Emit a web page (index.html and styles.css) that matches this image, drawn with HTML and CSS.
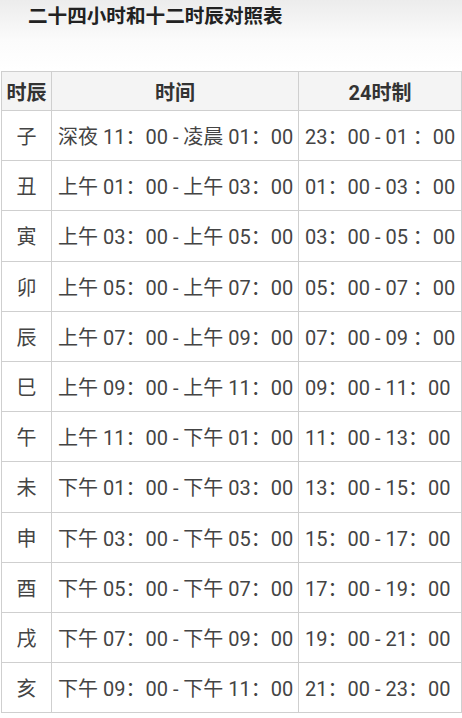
FILE: index.html
```html
<!DOCTYPE html>
<html lang="zh-CN">
<head>
<meta charset="utf-8">
<link rel="stylesheet" href="styles.css">
</head>
<body>
<h1 class="title">二十四小时和十二时辰对照表</h1>
<table class="chart">
  <colgroup><col class="c1"><col class="c2"><col class="c3"></colgroup>
  <thead>
    <tr><th>时辰</th><th>时间</th><th>24时制</th></tr>
  </thead>
  <tbody>
    <tr><td class="zh">子</td><td>深夜 11：00 - 凌晨 01：00</td><td>23：00 - 01 ：00</td></tr>
    <tr><td class="zh">丑</td><td>上午 01：00 - 上午 03：00</td><td>01：00 - 03 ：00</td></tr>
    <tr><td class="zh">寅</td><td>上午 03：00 - 上午 05：00</td><td>03：00 - 05 ：00</td></tr>
    <tr><td class="zh">卯</td><td>上午 05：00 - 上午 07：00</td><td>05：00 - 07 ：00</td></tr>
    <tr><td class="zh">辰</td><td>上午 07：00 - 上午 09：00</td><td>07：00 - 09 ：00</td></tr>
    <tr><td class="zh">巳</td><td>上午 09：00 - 上午 11：00</td><td>09：00 - 11：00</td></tr>
    <tr><td class="zh">午</td><td>上午 11：00 - 下午 01：00</td><td>11：00 - 13：00</td></tr>
    <tr><td class="zh">未</td><td>下午 01：00 - 下午 03：00</td><td>13：00 - 15：00</td></tr>
    <tr><td class="zh">申</td><td>下午 03：00 - 下午 05：00</td><td>15：00 - 17：00</td></tr>
    <tr><td class="zh">酉</td><td>下午 05：00 - 下午 07：00</td><td>17：00 - 19：00</td></tr>
    <tr><td class="zh">戌</td><td>下午 07：00 - 下午 09：00</td><td>19：00 - 21：00</td></tr>
    <tr><td class="zh">亥</td><td>下午 09：00 - 下午 11：00</td><td>21：00 - 23：00</td></tr>
  </tbody>
</table>
</body>
</html>
```
FILE: styles.css
```css
html, body {
  margin: 0;
  padding: 0;
  background: #fff;
}
body {
  font-family: Roboto, "Noto Sans CJK SC", sans-serif;
  color: #444;
  background: linear-gradient(#ececec 0, #fbfbfb 40px, #fff 70px);
  min-height: 718px;
}
.title {
  margin: 0;
  padding: 5px 0 0 28px;
  height: 71px;
  box-sizing: border-box;
  font-size: 19.6px;
  font-weight: 700;
  color: #222;
  line-height: 24px;
}
.chart {
  margin-left: 1px;
  width: 460px;
  border-collapse: collapse;
  table-layout: fixed;
  font-size: 20px;
}
.c1 { width: 50px; }
.c2 { width: 247px; }
.c3 { width: 163px; }
.chart th, .chart td {
  border: 1px solid #cfcfcf;
  padding: 0 0 0 6px;
  white-space: nowrap;
  overflow: hidden;
  text-align: left;
}
.chart th {
  height: 38px;
  background: #f4f4f4;
  font-weight: 700;
  font-size: 20px;
  color: #333;
  text-align: center;
  padding: 0;
}
.chart td {
  height: 49.2px;
}
.chart td.zh {
  text-align: center;
  padding: 0;
}
```
